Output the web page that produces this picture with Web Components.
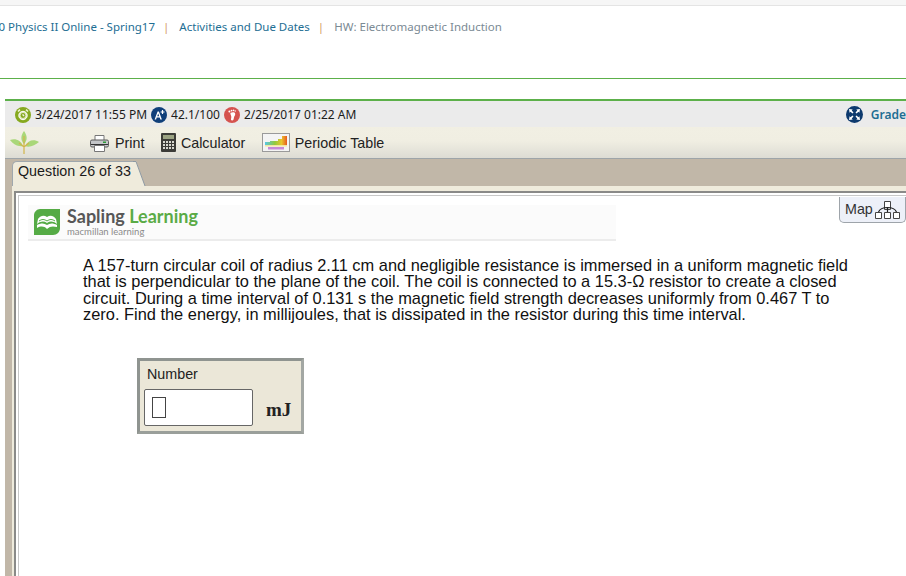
<!DOCTYPE html>
<html>
<head>
<meta charset="utf-8">
<title>HW: Electromagnetic Induction</title>
<style>
    html, body { margin: 0; height: 100%; overflow: hidden; background: #fff; }
    body { font-family: "Liberation Sans", Arial, sans-serif; }
</style>
</head>
<body>
<page-crumbs>
    <a>0 Physics II Online - Spring17</a>
    <a>Activities and Due Dates</a>
    <span>HW: Electromagnetic Induction</span>
</page-crumbs>
<assignment-frame>
    <status-bar></status-bar>
    <tool-bar></tool-bar>
    <tab-strip>Question 26 of 33</tab-strip>
    <question-panel>
        A 157-turn circular coil of radius 2.11 cm and negligible resistance is immersed in a uniform magnetic field<br>
        that is perpendicular to the plane of the coil. The coil is connected to a 15.3-Ω resistor to create a closed<br>
        circuit. During a time interval of 0.131 s the magnetic field strength decreases uniformly from 0.467 T to<br>
        zero. Find the energy, in millijoules, that is dissipated in the resistor during this time interval.
    </question-panel>
</assignment-frame>

<script>
// small helper, every element is the same: style + markup in an open shadow root
const define = (name, html) => {
    customElements.define(name, class extends HTMLElement {
        constructor() {
            super();
            const root = this.attachShadow({ mode: 'open' });
            root.innerHTML = html;
        }
    });
};

define('page-crumbs', `
    <style>
        :host {
            display: block;
            height: 78px;
            background: #fff;
            border-bottom: 1px solid #5cb04a;
        }
        .strip { height: 5px; background: #f6f6f6; border-bottom: 1px solid #e4e4e4; }
        .row {
            display: flex;
            margin: 12px 0 0 -1.500px;
            font: 11.500px/18px "Noto Sans", "Open Sans", sans-serif;
            color: #1e6e93;
        }
        ::slotted(a) { color: #1e6e93; }
        ::slotted(span) { color: #7b8a94; }
        .row ::slotted(*) { white-space: nowrap; }
        .row ::slotted(:not(:last-child))::after {
            content: "|";
            color: #d39a66;
            margin: 0 10px 0 8px;
        }
    </style>
    <div class="strip"></div>
    <div class="row"><slot></slot></div>
`);

define('assignment-frame', `
    <style>
        :host {
            display: block;
            margin: 20px 0 0 5px;
            border-top: 2px solid #5cb04a;
            height: 480px;
        }
    </style>
    <slot></slot>
`);

define('status-bar', `
    <style>
        :host {
            display: flex;
            align-items: center;
            height: 26px;
            box-sizing: border-box;
            padding: 1px 0 0 10px;
            background: #ebebeb;
            font: 12px/16px "Noto Sans", "Open Sans", sans-serif;
            color: #1c1c1c;
            white-space: nowrap;
        }
        svg { flex: none; display: block; }
        span { margin: 0 4px 0 4px; }
        .right { margin-left: auto; display: flex; align-items: center; color: #1e6e93; font-weight: 600; }
        .right span { margin: 0 0 0 8px; }
    </style>
    <svg width="16" height="16" viewBox="0 0 16 16">
        <circle cx="8" cy="8" r="8" fill="#86a91f"/>
        <circle cx="8" cy="8.500" r="4.200" fill="#dfe8b8" stroke="#fff" stroke-width="1"/>
        <circle cx="8" cy="8.500" r="2.400" fill="#86a91f"/>
        <path d="M8 7v1.700h1.300" stroke="#fff" fill="none"/>
        <path d="M3 4.500l2-1.800M13 4.500l-2-1.800" stroke="#eef3d2" stroke-width="1.600"/>
    </svg>
    <span>3/24/2017 11:55 PM</span>
    <svg width="16" height="16" viewBox="0 0 16 16">
        <circle cx="8" cy="8" r="8" fill="#0f3f7a"/>
        <path d="M3.600 12.400L6.600 4.600h1.300l3 7.800H9.300l-.6-1.800H5.700l-.6 1.800zM6.200 9.300h2L7.200 6.400z" fill="#fff"/>
        <path d="M11.500 3v4M9.600 5h3.900" stroke="#fff" stroke-width="1.200"/>
    </svg>
    <span>42.1/100</span>
    <svg width="16" height="16" viewBox="0 0 16 16">
        <circle cx="8" cy="8" r="8" fill="#d5534f"/>
        <path d="M6.600 5.800c2-.9 4.300-.7 4.600 1 .2 1.500-1 2.400-1.300 3.900-.2 1.500-.5 2.800-1.800 2.800-1.200 0-1.300-1.300-.9-2.500.3-1.200 0-2-.4-3.100-.3-.8-.6-1.600-.2-2.100z" fill="#fff"/>
        <circle cx="5.400" cy="4.600" r="1" fill="#fff"/>
        <circle cx="7.600" cy="3.600" r=".9" fill="#fff"/>
        <circle cx="9.600" cy="3.400" r=".8" fill="#fff"/>
        <circle cx="11.200" cy="4" r=".7" fill="#fff"/>
    </svg>
    <span>2/25/2017 01:22 AM</span>
    <div class="right">
        <svg width="17" height="17" viewBox="0 0 17 17">
            <circle cx="8.500" cy="8.500" r="8.500" fill="#0e3a6e"/>
            <path d="M3 3l3.700.6-1 1 1.800 1.800-1.100 1.100-1.800-1.800-1 1zM14 3l-.6 3.700-1-1-1.800 1.800-1.100-1.100 1.800-1.800-1-1zM3 14l.6-3.700 1 1 1.800-1.800 1.100 1.100-1.800 1.800 1 1zM14 14l-3.700-.6 1-1-1.800-1.800 1.100-1.100 1.800 1.800 1-1z" fill="#fff"/>
        </svg>
        <span>Grade</span>
    </div>
`);

define('tool-bar', `
    <style>
        :host {
            display: flex;
            align-items: center;
            height: 32px;
            box-sizing: border-box;
            padding: 0 0 0 5px;
            background: linear-gradient(#f1efe3 0%, #f0eee2 45%, #dddcd4 100%);
            border-bottom: 1px solid #9ea5a9;
            font: 14.300px/18px "Liberation Sans", Arial, sans-serif;
            color: #222;
            white-space: nowrap;
        }
        svg { display: block; flex: none; }
        .leaf { margin-right: 51px; }
        .item { display: flex; align-items: center; margin-right: 16.500px; }
        .item svg { margin-right: 6px; }
    </style>
    <svg class="leaf" width="29" height="25" viewBox="0 0 29 25">
        <path d="M14 14C10 10 11 5 14 1c3 4 4 9 0 13z" fill="#a9d779"/>
        <path d="M13 16C8 17 3 14 0 10c5-2 11 0 13 6z" fill="#a9d779"/>
        <path d="M15 16c5 2 10-1 14-4-5-3-11-2-14 4z" fill="#a9d779"/>
        <path d="M14 6v18M9 13l5 4 5-4" stroke="#d2b64b" stroke-width="1.200" fill="none"/>
    </svg>
    <div class="item">
        <svg width="19" height="18" viewBox="0 0 19 18">
            <path d="M5 1.500h9v5H5z" fill="#fff" stroke="#777"/>
            <rect x=".5" y="6" width="18" height="7" rx="1.500" fill="#c4c6c8" stroke="#5c5c5c"/>
            <rect x="13" y="7.500" width="3" height="1.500" fill="#2f9a3a"/>
            <path d="M1 10.500h17" stroke="#333"/>
            <path d="M4.500 11.500h10v6h-10z" fill="#fff" stroke="#777"/>
        </svg>
        <span>Print</span>
    </div>
    <div class="item">
        <svg width="15" height="19" viewBox="0 0 15 19" style="margin-right:5px">
            <rect width="15" height="19" rx="1" fill="#3c3c38"/>
            <rect x="2" y="2" width="11" height="4" fill="#9ba383"/>
            <path d="M2 8h2v2H2zM5 8h2v2H5zM8 8h2v2H8zM11 8h2v2h-2zM2 11h2v2H2zM5 11h2v2H5zM8 11h2v2H8zM11 11h2v2h-2zM2 14h2v2H2zM5 14h2v2H5zM8 14h2v2H8zM11 14h2v2h-2z" fill="#d8d8d0"/>
        </svg>
        <span>Calculator</span>
    </div>
    <div class="item">
        <svg width="28" height="19" viewBox="0 0 28 19" style="margin-right:5px">
            <defs>
                <linearGradient id="spectrum">
                    <stop offset="0" stop-color="#58c7e6"/>
                    <stop offset=".45" stop-color="#93c93a"/>
                    <stop offset=".75" stop-color="#e9c52e"/>
                    <stop offset="1" stop-color="#e8591f"/>
                </linearGradient>
            </defs>
            <rect x=".5" y=".5" width="27" height="18" fill="#f4f4f4" stroke="#9a9a9a"/>
            <path d="M3 12V9h5V8h8V6h4V3h5v9z" fill="url(#spectrum)"/>
            <rect x="3" y="12" width="22" height="1.500" fill="#f2e6a0"/>
            <rect x="6" y="14" width="16" height="2.500" fill="#c889d8"/>
        </svg>
        <span>Periodic Table</span>
    </div>
`);

define('tab-strip', `
    <style>
        :host {
            display: block;
            height: 27px;
            background: #c1b7a8;
            padding: 2px 0 0 7px;
            box-sizing: border-box;
            font: 14.300px/18px "Liberation Sans", Arial, sans-serif;
            color: #1a1a1a;
        }
        .tab { display: flex; align-items: flex-start; height: 25px; }
        .label {
            flex: none;
            width: 121px;
            height: 25px;
            padding: 0 0 0 5px;
            box-sizing: border-box;
            background: #efebdc;
            border-top: 1px solid #9fa7ad;
            border-left: 1px solid #9fa7ad;
            border-radius: 5px 0 0 0;
            white-space: nowrap;
        }
        svg { flex: none; display: block; }
    </style>
    <div class="tab">
        <div class="label"><slot></slot></div>
        <svg width="13" height="25" viewBox="0 0 13 25">
            <path d="M0 0h3l9 25H0z" fill="#efebdc"/>
            <path d="M0 .5h3L12 25" fill="none" stroke="#8d99a3"/>
        </svg>
    </div>
`);

define('question-panel', `
    <style>
        :host {
            display: block;
            position: relative;
            height: 400px;
            background: #c1b7a8;
            padding-left: 7px;
            box-sizing: border-box;
            font: 16.400px/16.400px "Liberation Sans", Arial, sans-serif;
            color: #111;
        }
        .edge {
            height: 100%;
            background: #efebdc;
            padding: 5px 0 0 2px;
            box-sizing: border-box;
        }
        .sheet {
            height: 100%;
            background: #fff;
            border-top: 2px solid #8a8a88;
            border-left: 2px solid #8a8a88;
            box-shadow: inset 2px 2px 0 #fff, inset 3px 3px 0 #c8c8c8;
            padding: 12px 0 0 12px;
            box-sizing: border-box;
        }
        .brand {
            display: flex;
            align-items: center;
            width: 588px;
            height: 36px;
            padding-left: 6px;
            box-sizing: border-box;
            background: #fbfbfb;
            border-bottom: 2px solid #ececec;
        }
        .brand svg { display: block; flex: none; margin-right: 7px; }
        .name { font: 700 18px/17px Lato, "Open Sans", sans-serif; color: #575757; white-space: nowrap; }
        .name b { font-weight: 700; color: #5aab46; }
        .sub { margin-top: 2px; font: 9.500px/10px Lato, "Open Sans", sans-serif; color: #8b8b8b; white-space: nowrap; }
        .text { margin: 16px 0 0 55px; white-space: nowrap; }
        answer-box { margin: 35px 0 0 109px; }
        .map {
            position: absolute;
            top: 11px;
            right: 0;
            display: flex;
            align-items: center;
            width: 67px;
            height: 26px;
            padding-left: 5px;
            box-sizing: border-box;
            background: #edf0f8;
            border: 1px solid #9ea4aa;
            border-top: 0;
            border-radius: 0 0 5px 5px;
            font-size: 14.300px;
            color: #333;
        }
        .map svg { margin-left: 2px; }
    </style>
    <div class="edge">
        <div class="sheet">
            <div class="brand">
                <svg width="26" height="26" viewBox="0 0 26 26">
                    <path d="M6 0h20v19c0 4-3 7-7 7H0V6c0-3 3-6 6-6z" fill="#55ab45"/>
                    <path d="M4 10c3-4 6-4 9-2 3-2 6-2 9 2l1 5c-4-3-7-3-10-1-3-2-6-2-10 1z" fill="#fff"/>
                    <path d="M3 16c4-2 7-2 10 0 3-2 6-2 10 0v2c-4-1-7-1-10 2-3-3-6-3-10-1z" fill="#fff"/>
                    <path d="M5 12c3-2 5-2 8 0 3-2 5-2 8 0" stroke="#55ab45" fill="none"/>
                </svg>
                <div>
                    <div class="name">Sapling <b>Learning</b></div>
                    <div class="sub">macmillan learning</div>
                </div>
            </div>
            <div class="text"><slot></slot></div>
            <answer-box></answer-box>
        </div>
    </div>
    <div class="map">
        <span>Map</span>
        <svg width="25" height="18" viewBox="0 0 25 18">
            <path d="M9.500.5h6v8h-6zM.5 11.500h6v6h-6zM9.500 11.500h6v6h-6zM18.500 11.500h6v6h-6z" fill="#fff" stroke="#444"/>
            <path d="M3.500 11c1.500-3.500 5-4.500 9-4.500s7.500 1 9 4.500M12.500 7v4" fill="none" stroke="#222" stroke-width="1.200"/>
        </svg>
    </div>
`);

define('answer-box', `
    <style>
        :host {
            display: block;
            width: 167px;
            height: 76px;
            box-sizing: border-box;
            background: #ebe7d8;
            border: 3px solid #8f9490;
            border-right-color: #a3a7a3;
            border-bottom-color: #9a9f9a;
            padding: 5px 0 0 7px;
            font: 14.300px/17px "Liberation Sans", Arial, sans-serif;
            color: #222;
        }
        .row { display: flex; align-items: center; margin-top: 6px; }
        .field {
            flex: none;
            width: 109px;
            height: 37px;
            margin-left: -3px;
            box-sizing: border-box;
            background: #fff;
            border: 1px solid #666;
            border-radius: 2px;
            display: flex;
            align-items: center;
            padding-left: 7px;
        }
        .caret { width: 14px; height: 21px; box-sizing: border-box; border: 1px solid #444; }
        .unit { margin: 4px 0 0 13px; font: bold 19px/17px "Liberation Serif", "Times New Roman", serif; color: #222; }
    </style>
    <div>Number</div>
    <div class="row">
        <div class="field"><div class="caret"></div></div>
        <div class="unit">mJ</div>
    </div>
`);
</script>
</body>
</html>
